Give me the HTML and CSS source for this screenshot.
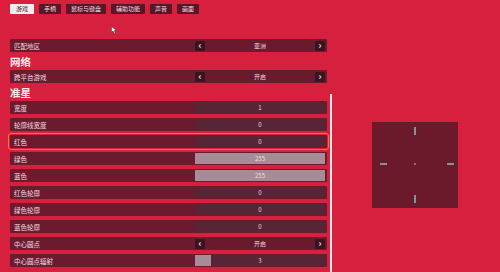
FILE: index.html
```html
<!DOCTYPE html>
<html lang="zh">
<head>
    <meta charset="UTF-8">
    <title>设置</title>
    <link rel="stylesheet" href="styles.css">
</head>
<body>
    <nav class="tabs">
        <span class="tab active">游戏</span>
        <span class="tab">手柄</span>
        <span class="tab">鼠标与键盘</span>
        <span class="tab">辅助功能</span>
        <span class="tab">声音</span>
        <span class="tab">画面</span>
    </nav>

    <svg class="cursor" width="6" height="8" viewBox="0 0 6 8">
        <path d="M0.5 0.5 L0.5 6.5 L2 5 L3.5 7.5 L4.5 7 L3.2 4.6 L5.3 4.6 Z" fill="#fff" stroke="#333" stroke-width="0.5"/>
    </svg>

    <main class="layout">
        <div class="settings">
            <div class="row">
                <span class="label">匹配地区</span>
                <div class="value picker"><span class="arrow">&#8249;</span><span class="text">亚洲</span><span class="arrow">&#8250;</span></div>
            </div>

            <h2 class="heading">网络</h2>
            <div class="row">
                <span class="label">跨平台游戏</span>
                <div class="value picker"><span class="arrow">&#8249;</span><span class="text">开启</span><span class="arrow">&#8250;</span></div>
            </div>

            <h2 class="heading">准星</h2>
            <div class="row">
                <span class="label">宽度</span>
                <div class="value slider"><span class="text">1</span></div>
            </div>
            <div class="row">
                <span class="label">轮廓线宽度</span>
                <div class="value slider"><span class="text">0</span></div>
            </div>
            <div class="row selected">
                <span class="label">红色</span>
                <div class="value slider"><span class="text">0</span></div>
            </div>
            <div class="row">
                <span class="label">绿色</span>
                <div class="value slider"><div class="fill" style="width: 100%"></div><span class="text">255</span></div>
            </div>
            <div class="row">
                <span class="label">蓝色</span>
                <div class="value slider"><div class="fill" style="width: 100%"></div><span class="text">255</span></div>
            </div>
            <div class="row">
                <span class="label">红色轮廓</span>
                <div class="value slider"><span class="text">0</span></div>
            </div>
            <div class="row">
                <span class="label">绿色轮廓</span>
                <div class="value slider"><span class="text">0</span></div>
            </div>
            <div class="row">
                <span class="label">蓝色轮廓</span>
                <div class="value slider"><span class="text">0</span></div>
            </div>
            <div class="row">
                <span class="label">中心圆点</span>
                <div class="value picker"><span class="arrow">&#8249;</span><span class="text">开启</span><span class="arrow">&#8250;</span></div>
            </div>
            <div class="row">
                <span class="label">中心圆点辐射</span>
                <div class="value slider"><div class="fill" style="width: 12%"></div><span class="text">3</span></div>
            </div>
        </div>

        <div class="scrollbar"></div>

        <div class="preview">
            <svg width="86" height="86" viewBox="0 0 86 86">
                <g stroke="#8ec9cf" stroke-width="1.4">
                    <line x1="43" y1="5" x2="43" y2="13"/>
                    <line x1="43" y1="73" x2="43" y2="81"/>
                    <line x1="8" y1="42" x2="15" y2="42"/>
                    <line x1="75" y1="42" x2="82" y2="42"/>
                </g>
                <rect x="42.3" y="41.3" width="1.4" height="1.4" fill="#8ec9cf"/>
            </svg>
        </div>
    </main>
</body>
</html>
```

FILE: styles.css
```css
* {
    box-sizing: border-box;
    margin: 0;
    padding: 0;
}

body {
    width: 500px;
    height: 272px;
    overflow: hidden;
    background: #d71f3e;
    font-family: 'Noto Sans CJK SC', 'Noto Sans', sans-serif;
    color: #f3dfe3;
    position: relative;
}

.tabs {
    display: flex;
    gap: 5px;
    padding: 4px 0 0 10px;
}

.tab {
    height: 10px;
    line-height: 10px;
    padding: 0 5px;
    font-size: 6px;
    background: #5a1626;
    color: #eedde1;
    border-radius: 1px;
}

.tab.active {
    background: #f2ecee;
    color: #3a2a30;
    padding: 0 6px;
}

.cursor {
    position: absolute;
    left: 111px;
    top: 26px;
}

.layout {
    display: flex;
    padding: 25px 0 0 10px;
}

.settings {
    width: 317px;
    display: flex;
    flex-direction: column;
}

.row {
    display: flex;
    align-items: center;
    height: 13px;
    margin-bottom: 4px;
    padding: 1px 2px 1px 4px;
    background: #6c1a2d;
    border-radius: 1px;
}

.row.selected {
    outline: 1px solid #ee7a35;
    outline-offset: 1px;
}

.label {
    flex: 1;
    font-size: 6.5px;
    color: #f0dde2;
}

.value {
    position: relative;
    width: 130px;
    height: 11px;
    display: flex;
    align-items: center;
    font-size: 6px;
    color: #eadde1;
}

.value .text {
    flex: 1;
    text-align: center;
    position: relative;
}

.slider {
    background: #572535;
}

.fill {
    position: absolute;
    left: 0;
    top: 0;
    bottom: 0;
    background: #a68c97;
}

.picker {
    background: #6a1a2d;
}

.arrow {
    width: 10px;
    height: 10px;
    line-height: 9px;
    text-align: center;
    font-size: 9px;
    font-weight: bold;
    background: #3b1420;
    color: #f0e4e7;
    border-radius: 1px;
}

.heading {
    height: 15px;
    margin-top: -1px;
    line-height: 13px;
    font-size: 10.5px;
    font-weight: bold;
    color: #fbeef0;
}

.scrollbar {
    width: 2px;
    height: 180px;
    margin: 55px 0 0 3px;
    background: #f7e8eb;
}

.preview {
    width: 86px;
    height: 86px;
    margin: 83px 0 0 40px;
    background: #6b1a2b;
}

.preview svg {
    display: block;
}
```
